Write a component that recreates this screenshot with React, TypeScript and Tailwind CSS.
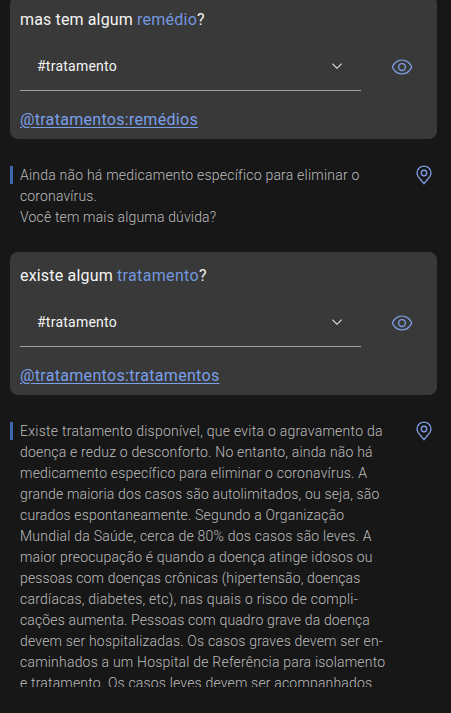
import type { ReactNode } from "react";

type Line = [text: string, tracking: string];

const shortAnswer: Line[] = [
  ["Ainda não há medicamento específico para eliminar o", "tracking-[0.217px]"],
  ["coronavírus.", "tracking-[0.141px]"],
  ["Você tem mais alguma dúvida?", "tracking-[0.167px]"],
];

const longAnswer: Line[] = [
  ["Existe tratamento disponível, que evita o agravamento da", "tracking-[0.252px]"],
  ["doença e reduz o desconforto. No entanto, ainda não há", "tracking-[0.191px]"],
  ["medicamento específico para eliminar o coronavírus. A", "tracking-[0.212px]"],
  ["grande maioria dos casos são autolimitados, ou seja, são", "tracking-[0.164px]"],
  ["curados espontaneamente. Segundo a Organização", "tracking-[0.166px]"],
  ["Mundial da Saúde, cerca de 80% dos casos são leves. A", "tracking-[0.227px]"],
  ["maior preocupação é quando a doença atinge idosos ou", "tracking-[0.173px]"],
  ["pessoas com doenças crônicas (hipertensão, doenças", "tracking-[0.146px]"],
  ["cardíacas, diabetes, etc), nas quais o risco de compli-", "tracking-[0.242px]"],
  ["cações aumenta. Pessoas com quadro grave da doença", "tracking-[0.138px]"],
  ["devem ser hospitalizadas. Os casos graves devem ser en-", "tracking-[0.189px]"],
  ["caminhados a um Hospital de Referência para isolamento", "tracking-[0.208px]"],
  ["e tratamento. Os casos leves devem ser acompanhados", "tracking-[0.177px]"],
];

function ViewIcon() {
  return (
    <svg viewBox="0 0 32 32" className="size-[22px] shrink-0 fill-[#7b9ce0]">
      <path d="M30.94,15.66A16.69,16.69,0,0,0,16,5,16.69,16.69,0,0,0,1.06,15.66a1,1,0,0,0,0,.68A16.69,16.69,0,0,0,16,27,16.69,16.69,0,0,0,30.94,16.34,1,1,0,0,0,30.94,15.66ZM16,25c-5.3,0-10.9-3.93-12.93-9C5.1,10.93,10.7,7,16,7s10.9,3.93,12.93,9C26.9,21.07,21.3,25,16,25Z" />
      <path d="M16,10a6,6,0,1,0,6,6A6,6,0,0,0,16,10Zm0,10a4,4,0,1,1,4-4A4,4,0,0,1,16,20Z" />
    </svg>
  );
}

function LocationIcon() {
  return (
    <svg viewBox="0 0 32 32" className="-mt-px size-[22px] shrink-0 fill-[#7b9ce0]">
      <path d="M16,18a5,5,0,1,1,5-5A5.0057,5.0057,0,0,1,16,18Zm0-8a3,3,0,1,0,3,3A3.0033,3.0033,0,0,0,16,10Z" />
      <path d="M16,30,7.5645,20.0513c-.0479-.0571-.3482-.4515-.3482-.4515A10.8888,10.8888,0,0,1,5,13a11,11,0,0,1,22,0,10.8844,10.8844,0,0,1-2.2148,6.5973l-.0015.0025s-.3.3944-.3447.4474ZM8.8125,18.395c.001.0007.2334.3082.2866.3744L16,26.9079l6.91-8.15c.0439-.0552.2783-.3649.2788-.3657A8.901,8.901,0,0,0,25,13,9,9,0,1,0,7,13a8.9054,8.9054,0,0,0,1.8125,5.395Z" />
    </svg>
  );
}

function ChevronDown() {
  return (
    <svg viewBox="0 0 16 16" className="size-4 shrink-0 fill-[#e4e4e4]">
      <path d="M8 11L3 6 3.7 5.3 8 9.6 12.3 5.3 13 6z" />
    </svg>
  );
}

function MessageCard({ title, entity }: { title: ReactNode; entity: ReactNode }) {
  return (
    <section className="mx-[10px] h-[143px] w-[427px] shrink-0 rounded-lg bg-[#393939] px-[10px] pt-[14px]">
      <h2 className="h-5 whitespace-pre text-base leading-5 text-[#f4f4f4]">{title}</h2>
      <div className="mt-4 flex h-[45px] items-start">
        <div className="flex h-[45px] w-[341px] items-start justify-between border-b border-[#a2a2a2] pr-4 pl-[17px]">
          <span className="pt-[10px] text-sm leading-5 tracking-[0.24px] text-[#f4f4f4]">#tratamento</span>
          <span className="pt-[12px]">
            <ChevronDown />
          </span>
        </div>
        <span className="ml-[30px] pt-[10px]">
          <ViewIcon />
        </span>
      </div>
      <div className="mt-[17px] leading-5">{entity}</div>
    </section>
  );
}

function Answer({ lines }: { lines: Line[] }) {
  return (
    <section className="flex pl-[10px]">
      <div className="mt-px h-[18px] w-[3px] shrink-0 bg-[#3f68b0]" />
      <div className="ml-[7px] w-[393px] shrink-0 text-sm leading-[21px] font-light whitespace-nowrap text-[#bdbdbd]">
        {lines.map(([text, tracking]) => (
          <p key={text} className={tracking}>
            {text}
          </p>
        ))}
      </div>
      <LocationIcon />
    </section>
  );
}

const entityLink = "text-base text-[#799fe9] underline decoration-1 underline-offset-2";

export default function App() {
  return (
    <main className="h-[713px] w-[451px] overflow-hidden bg-[#171717] font-['Roboto',sans-serif]">
      <div className="flex h-[687px] flex-col overflow-hidden">
        <div className="-mt-1 flex flex-col">
          <MessageCard
            title={
              <>
                <span className="tracking-[0.137px]">mas tem algum </span>
                <span className="tracking-[0.241px] text-[#7297df]">remédio</span>?
              </>
            }
            entity={<a className={`${entityLink} tracking-[0.304px]`}>@tratamentos:remédios</a>}
          />
          <div className="h-[113px] pt-[26px]">
            <Answer lines={shortAnswer} />
          </div>
          <MessageCard
            title={
              <>
                <span className="tracking-[0.18px]">existe algum </span>
                <span className="tracking-[0.346px] text-[#7297df]">tratamento</span>?
              </>
            }
            entity={<a className={`${entityLink} tracking-[0.32px]`}>@tratamentos:tratamentos</a>}
          />
          <div className="pt-[26px]">
            <Answer lines={longAnswer} />
          </div>
        </div>
      </div>
    </main>
  );
}
